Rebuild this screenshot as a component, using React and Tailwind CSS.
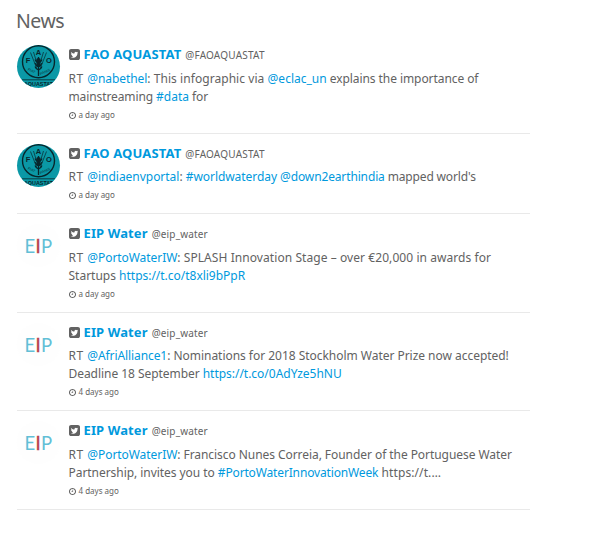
import React from "react";

const items = [
  {
    source: "fao",
    age: "a day ago",
    height: "h-[99px]",
    bodyGap: "mt-[7px]",
    lines: [
      [
        ["RT ", "text", "tracking-[0.5px]"],
        ["@nabethel", "link", "tracking-[-0.08px]"],
        [": This infographic via ", "text", "tracking-[0.06px]"],
        ["@eclac_un", "link"],
        [" explains the importance of", "text", "tracking-[-0.07px]"],
      ],
      [["mainstreaming ", "text", "tracking-[-0.1px]"], ["#data", "link"], [" for", "text", "tracking-[-0.1px]"]],
    ],
  },
  {
    source: "fao",
    age: "a day ago",
    height: "h-[80px]",
    bodyGap: "mt-[6px]",
    lines: [
      [
        ["RT ", "text", "tracking-[0.5px]"],
        ["@indiaenvportal", "link", "tracking-[-0.03px]"],
        [": "],
        ["#worldwaterday", "link", "tracking-[-0.06px]"],
        [" "],
        ["@down2earthindia", "link", "tracking-[-0.14px]"],
        [" mapped world's", "text", "tracking-[-0.15px]"],
      ],
    ],
  },
  {
    source: "eip",
    age: "a day ago",
    height: "h-[99px]",
    bodyGap: "mt-[7px]",
    lines: [
      [["RT ", "text", "tracking-[0.5px]"], ["@PortoWaterIW", "link", "tracking-[-0.06px]"], [": SPLASH Innovation Stage – over €20,000 in awards for", "text", "tracking-[0.07px]"]],
      [["Startups "], ["https://t.co/t8xli9bPpR", "link", "tracking-[-0.02px]"]],
    ],
  },
  {
    source: "eip",
    age: "4 days ago",
    height: "h-[98px]",
    bodyGap: "mt-[6px]",
    lines: [
      [["RT ", "text", "tracking-[0.5px]"], ["@AfriAlliance1", "link", "tracking-[-0.09px]"], [": Nominations for 2018 Stockholm Water Prize now accepted!", "text", "tracking-[-0.03px]"]],
      [["Deadline 18 September ", "text", "tracking-[-0.05px]"], ["https://t.co/0AdYze5hNU", "link", "tracking-[-0.02px]"]],
    ],
  },
  {
    source: "eip",
    age: "4 days ago",
    height: "h-[99px]",
    bodyGap: "mt-[7px]",
    lines: [
      [["RT ", "text", "tracking-[0.5px]"], ["@PortoWaterIW", "link", "tracking-[-0.06px]"], [": Francisco Nunes Correia, Founder of the Portuguese Water", "text", "tracking-[-0.06px]"]],
      [["Partnership, invites you to ", "text", "tracking-[-0.05px]"], ["#PortoWaterInnovationWeek", "link", "tracking-[-0.15px]"], [" https://t.…", "text", "tracking-[0.1px]"]],
    ],
  },
];

const sources = {
  fao: { name: "FAO AQUASTAT", handle: "@FAOAQUASTAT", Avatar: FaoAvatar, handleTracking: "tracking-[0.2px]" },
  eip: { name: "EIP Water", handle: "@eip_water", Avatar: EipAvatar, handleTracking: "tracking-[0.15px]" },
};

function TwitterSquare({ className }) {
  return (
    <svg viewBox="128 128 1536 1536" fill="currentColor" className={className}>
      <path d="M1408 610q-56 25-121 34 68-40 93-117-65 38-134 51-61-66-153-66-87 0-148.5 61.5t-61.5 148.5q0 29 5 48-129-7-242-65t-192-155q-29 50-29 106 0 114 91 175-47-1-100-26v2q0 75 50 133.5t123 72.5q-29 8-51 8-13 0-39-4 21 63 74.5 104t121.5 42q-116 90-261 90-26 0-50-3 148 94 322 94 112 0 210-35.5t168-95 120.5-137 75-162 24.5-168.5q0-18-1-27 63-45 105-109zm256-194v960q0 119-84.5 203.5t-203.5 84.5h-960q-119 0-203.5-84.5t-84.5-203.5v-960q0-119 84.5-203.5t203.5-84.5h960q119 0 203.5 84.5t84.5 203.5z" />
    </svg>
  );
}

function Clock({ className }) {
  return (
    <svg viewBox="128 128 1536 1536" fill="currentColor" className={className}>
      <path d="M1024 544v448q0 14-9 23t-23 9h-320q-14 0-23-9t-9-23v-64q0-14 9-23t23-9h224v-352q0-14 9-23t23-9h64q14 0 23 9t9 23zm416 352q0-148-73-273t-198-198-273-73-273 73-198 198-73 273 73 273 198 198 273 73 273-73 198-198 73-273zm224 0q0 209-103 385.5t-279.5 279.5-385.5 103-385.5-103-279.5-279.5-103-385.5 103-385.5 279.5-279.5 385.5-103 385.5 103 279.5 279.5 103 385.5z" />
    </svg>
  );
}

function FaoAvatar() {
  return (
    <div className="size-[43px] shrink-0 overflow-hidden rounded-full bg-[#0b98a6]">
      <svg viewBox="0 0 43 43" className="size-full font-['Liberation_Sans'] font-bold" fill="#08262c">
        <circle cx="21.5" cy="16.8" r="16" fill="none" stroke="#08262c" strokeWidth="1.4" />
        <text x="21.5" y="9.8" fontSize="7.5" textAnchor="middle">A</text>
        <text x="11" y="17.5" fontSize="7.5" textAnchor="middle">F</text>
        <text x="31.8" y="17.5" fontSize="7.5" textAnchor="middle">O</text>
        <g fill="none" stroke="#08262c">
          <path d="M21.5 12v19" strokeWidth="1.3" />
          <path d="M20 24 13.5 7.5M20.5 20 16.5 7M23 24 29.5 7.5M22.5 20 26.5 7" strokeWidth="0.7" />
          <path d="M18 14.5q1 3 3.5 3.5 2.5-.5 3.5-3.5M18 18q1 3 3.5 3.5 2.5-.5 3.5-3.5M18 21.5q1 3 3.5 3.5 2.5-.5 3.5-3.5" strokeWidth="1.1" />
        </g>
        <ellipse cx="21.5" cy="15.5" rx="2.3" ry="2.4" />
        <ellipse cx="21.5" cy="20" rx="2.3" ry="2.3" />
        <g fontSize="3.6" opacity=".6">
          <text x="10.5" y="25.2" transform="rotate(24 10.5 25.2)">FIAT</text>
          <text x="23.6" y="30.2" transform="rotate(-24 23.6 30.2)">PANIS</text>
        </g>
        <path d="M5 34.8h33" stroke="#08262c" strokeWidth="0.8" />
        <text x="21.5" y="41" fontSize="5.4" textAnchor="middle">AQUASTAT</text>
      </svg>
    </div>
  );
}

function EipAvatar() {
  return (
    <div className="flex size-[43px] shrink-0 items-center justify-center rounded-full bg-[#fefefe] pt-px font-['Lato'] text-[18.5px] leading-none tracking-[0.3px] text-[#62bfd6]">
      <span>E</span>
      <span className="text-[#b8404e] [-webkit-text-stroke:0.4px_#b8404e]">I</span>
      <span>P</span>
    </div>
  );
}

function Segment({ text, kind, tracking }) {
  return kind === "link" ? (
    <a className={`text-[#0099dd] ${tracking || ""}`}>{text}</a>
  ) : (
    <span className={tracking}>{text}</span>
  );
}

function Tweet({ item }) {
  const { name, handle, Avatar, handleTracking } = sources[item.source];
  return (
    <li className={`flex gap-[8.5px] border-b border-[#e9e9e9] pt-[10px] ${item.height}`}>
      <Avatar />
      <div className="min-w-0 flex-1">
        <div className="flex h-[18px] items-center whitespace-nowrap">
          <TwitterSquare className="mr-[4px] size-[11px]" />
          <b className="mr-[4px] text-[13px] leading-[18px] tracking-[0.12px] text-[#0099dd]">{name}</b>
          <span className={`pt-[2px] text-[10px] leading-[18px] ${handleTracking}`}>{handle}</span>
        </div>
        <div className={`text-[12px] leading-[18px] ${item.bodyGap}`}>
          {item.lines.map((line, i) => (
            <p key={i} className="whitespace-pre">
              {line.map(([text, kind, tracking], j) => (
                <Segment key={j} text={text} kind={kind} tracking={tracking} />
              ))}
            </p>
          ))}
        </div>
        <div className="flex h-[18px] items-center text-[8px]">
          <Clock className="mr-[3px] size-[7px]" />
          <span>{item.age}</span>
        </div>
      </div>
    </li>
  );
}

export default function App() {
  return (
    <main className="h-[542px] w-[591px] overflow-hidden bg-white pl-[17px] font-['Noto_Sans',sans-serif] text-[#626262]">
      <h2 className="-ml-px h-[35px] pt-[6px] text-[19.5px] leading-[30px] tracking-[-0.5px]">News</h2>
      <ul className="w-[513px]">
        {items.map((item, i) => (
          <Tweet key={i} item={item} />
        ))}
      </ul>
    </main>
  );
}
